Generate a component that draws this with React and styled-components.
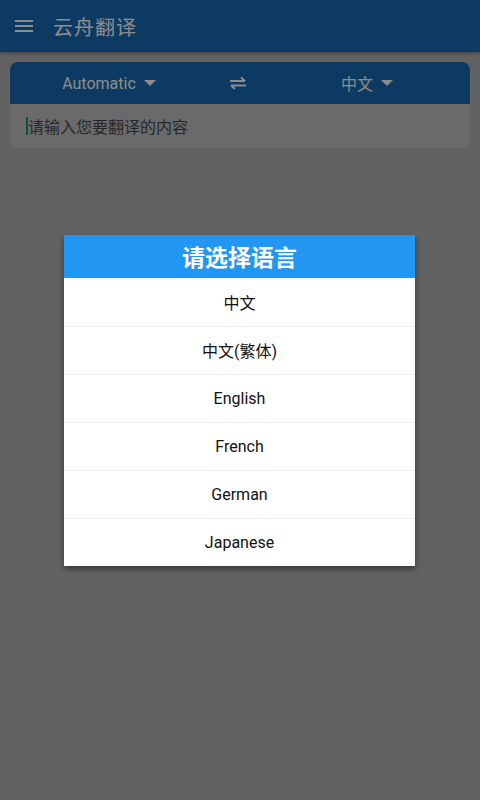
import styled, { createGlobalStyle } from 'styled-components';

const GlobalStyle = createGlobalStyle`
    html, body, #root {
        margin: 0;
        padding: 0;
        height: 100%;
    }
    body {
        font-family: Roboto, "Noto Sans CJK SC", sans-serif;
        background: #b3b3b3;
    }
`;

const languages = ['中文', '中文(繁体)', 'English', 'French', 'German', 'Japanese'];

const App = () => {
    return(
        <Page>
            <GlobalStyle />
            <AppBar>
                <MenuIcon>
                    <span /><span /><span />
                </MenuIcon>
                <AppTitle>云舟翻译</AppTitle>
            </AppBar>
            <Card>
                <LangBar>
                    <LangPick>Automatic <Caret /></LangPick>
                    <SwapBox>
                        <svg width="18" height="14" viewBox="0 0 18 14">
                            <path d="M1 5h15M12 1.5l4 3.5" stroke="#fff" strokeWidth="2" fill="none" />
                            <path d="M17 9.5H2M6 13l-4-3.5" stroke="#fff" strokeWidth="2" fill="none" />
                        </svg>
                    </SwapBox>
                    <LangPick>中文 <Caret /></LangPick>
                </LangBar>
                <InputRow>
                    <Cursor />请输入您要翻译的内容
                </InputRow>
            </Card>
            <Overlay>
                <Dialog>
                    <DialogTitle>请选择语言</DialogTitle>
                    {languages.map((l) => (
                        <Option key={l}>{l}</Option>
                    ))}
                </Dialog>
            </Overlay>
        </Page>
    );
}
export default App;

const Page = styled.div`
    position: relative;
    width: 480px;
    height: 800px;
    overflow: hidden;
    background: #b3b3b3;
`;
const AppBar = styled.div`
    height: 52px;
    background: #186bb2;
    display: flex;
    align-items: center;
    padding-left: 15px;
    box-shadow: 0 2px 3px rgba(0,0,0,0.25);
`;
const MenuIcon = styled.div`
    width: 18px;
    display: flex;
    flex-direction: column;
    gap: 3px;
    span {
        display: block;
        height: 2px;
        background: #fff;
    }
`;
const AppTitle = styled.div`
    margin-left: 20px;
    color: #fff;
    font-size: 20px;
    font-family: "Noto Sans CJK SC", sans-serif;
    letter-spacing: 1px;
`;
const Card = styled.div`
    margin: 10px 10px 0;
    background: #c2c2c2;
    border-radius: 8px;
    overflow: hidden;
`;
const LangBar = styled.div`
    height: 42px;
    background: #186bb2;
    display: flex;
    align-items: center;
    padding-right: 4px;
`;
const LangPick = styled.div`
    flex: 1;
    display: flex;
    align-items: center;
    justify-content: center;
    gap: 8px;
    color: #fff;
    font-size: 16px;
    font-family: Roboto, "Noto Sans CJK SC", sans-serif;
`;
const Caret = styled.span`
    width: 0;
    height: 0;
    border-left: 6px solid transparent;
    border-right: 6px solid transparent;
    border-top: 6px solid #fff;
`;
const SwapBox = styled.div`
    width: 60px;
    display: flex;
    justify-content: center;
    align-items: center;
`;
const InputRow = styled.div`
    height: 44px;
    display: flex;
    align-items: center;
    padding-left: 16px;
    color: #4a4a4a;
    font-size: 16px;
    font-family: "Noto Sans CJK SC", sans-serif;
`;
const Cursor = styled.span`
    width: 2px;
    height: 18px;
    background: #009688;
`;
const Overlay = styled.div`
    position: absolute;
    inset: 0;
    background: rgba(0,0,0,0.45);
    display: flex;
    align-items: center;
    justify-content: center;
`;
const Dialog = styled.div`
    width: 351px;
    margin-left: -1px;
    background: #fff;
    box-shadow: 0 3px 6px rgba(0,0,0,0.45);
`;
const DialogTitle = styled.div`
    height: 43px;
    background: #2196f3;
    color: #fff;
    font-size: 23px;
    font-weight: bold;
    font-family: "Noto Sans CJK SC", sans-serif;
    display: flex;
    align-items: center;
    justify-content: center;
`;
const Option = styled.div`
    height: 48px;
    display: flex;
    align-items: center;
    justify-content: center;
    font-size: 16px;
    color: #111;
    font-family: Roboto, "Noto Sans CJK SC", sans-serif;
    & + & {
        border-top: 1px solid #eee;
        height: 47px;
    }
`;
